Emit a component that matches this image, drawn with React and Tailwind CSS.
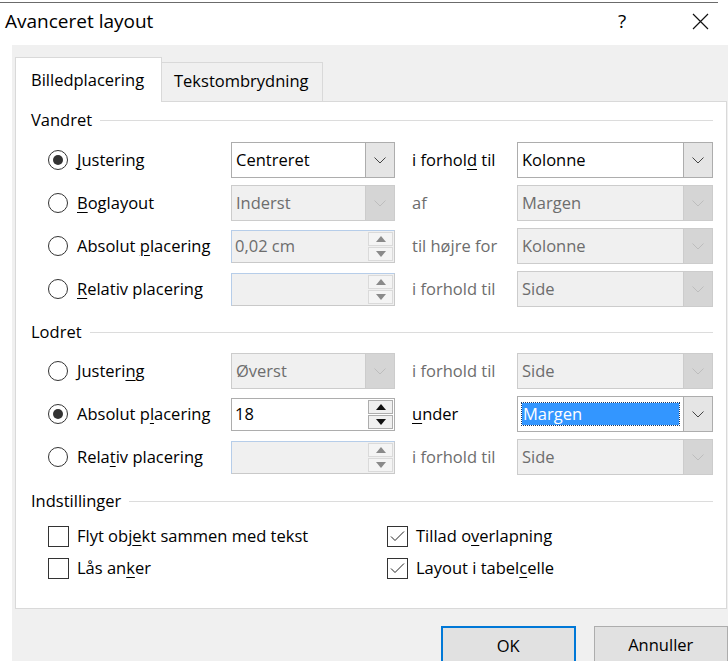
import React from "react";

const font = { fontFamily: '"Open Sans", "Noto Sans", sans-serif' };

function Chevron({ disabled }) {
  return (
    <svg width="12" height="7" viewBox="0 0 12 7">
      <polyline
        points="0.5,0.5 6,6 11.5,0.5"
        fill="none"
        stroke={disabled ? "#bdbdbd" : "#444"}
        strokeWidth="1"
      />
    </svg>
  );
}

function Combo({ value, disabled, selected, width }) {
  return (
    <div
      className={`flex h-[36px] border ${
        disabled ? "border-[#cccccc] bg-[#f0f0f0]" : "border-[#adadad] bg-white"
      }`}
      style={{ width }}
    >
      <div className="flex-1 flex items-center px-[4px] min-w-0">
        {selected ? (
          <div className="h-[22px] w-full flex items-center bg-[#3396ff] outline outline-1 outline-dotted outline-[#1a3a66] text-white px-[1px]">
            {value}
          </div>
        ) : (
          <span className={disabled ? "text-[#6d6d6d]" : "text-black"}>{value}</span>
        )}
      </div>
      <div
        className={`w-[29px] flex items-center justify-center border-l ${
          disabled ? "border-[#cccccc] bg-[#d5d5d5]" : "border-[#adadad] bg-[#e5e5e5]"
        }`}
      >
        <Chevron disabled={disabled} />
      </div>
    </div>
  );
}

function Arrow({ up, disabled }) {
  return (
    <svg width="10" height="6" viewBox="0 0 10 6">
      <polygon
        points={up ? "5,0 10,6 0,6" : "0,0 10,0 5,6"}
        fill={disabled ? "#8a8a8a" : "#111"}
      />
    </svg>
  );
}

function Spinner({ value, disabled }) {
  return (
    <div
      className={`flex h-[33px] w-[164px] border ${
        disabled
          ? "border-[#c9c9c9] border-t-[#b6cde9] border-l-[#b6cde9] bg-[#f0f0f0]"
          : "border-[#adadad] bg-white"
      }`}
    >
      <div className={`flex-1 flex items-center px-[3px] ${disabled ? "text-[#6d6d6d]" : "text-black"}`}>
        {value}
      </div>
      <div className="w-[26px] flex flex-col py-[1px] pr-[1px] gap-[1px]">
        <div
          className={`flex-1 flex items-center justify-center border ${
            disabled ? "border-[#dadada] bg-[#f4f4f4]" : "border-[#adadad] bg-[#f0f0f0]"
          }`}
        >
          <Arrow up disabled={disabled} />
        </div>
        <div
          className={`flex-1 flex items-center justify-center border ${
            disabled ? "border-[#dadada] bg-[#f4f4f4]" : "border-[#adadad] bg-[#f0f0f0]"
          }`}
        >
          <Arrow disabled={disabled} />
        </div>
      </div>
    </div>
  );
}

function Radio({ checked }) {
  return (
    <div className="w-[20px] h-[20px] rounded-full border border-[#333] flex items-center justify-center bg-white shrink-0">
      {checked && <div className="w-[10px] h-[10px] rounded-full bg-[#333]" />}
    </div>
  );
}

function Check({ checked }) {
  return (
    <div className="w-[21px] h-[21px] border border-[#333] bg-white flex items-center justify-center shrink-0">
      {checked && (
        <svg width="15" height="11" viewBox="0 0 15 11">
          <polyline points="1,5.5 5,9.5 14,0.5" fill="none" stroke="#222" strokeWidth="1" />
        </svg>
      )}
    </div>
  );
}

function U({ children }) {
  return <span className="underline underline-offset-[3px] decoration-1">{children}</span>;
}

function GroupHeader({ title }) {
  return (
    <div className="h-[20px] flex items-center gap-[8px] pr-[13px]">
      <span>{title}</span>
      <div className="flex-1 h-px bg-[#dcdcdc]" />
    </div>
  );
}

function Row({ checked, label, field, middle, middleDisabled, right }) {
  return (
    <div className="h-[36px] flex items-center pl-[17px]">
      <div className="w-[183px] flex items-center gap-[9px]">
        <Radio checked={checked} />
        <span>{label}</span>
      </div>
      {field}
      <div className={`w-[105px] ml-[17px] ${middleDisabled ? "text-[#6d6d6d]" : "text-black"}`}>{middle}</div>
      {right}
    </div>
  );
}

function CheckRow({ checked, children }) {
  return (
    <div className="w-[341px] flex items-center gap-[8px]">
      <Check checked={checked} />
      <span>{children}</span>
    </div>
  );
}

export default function App() {
  return (
    <div className="w-[728px] h-[661px] bg-white overflow-hidden flex flex-col text-[16.5px] text-black" style={font}>
      {/* window title */}
      <div className="h-[45px] shrink-0 flex flex-col">
        <div className="mt-[2px] h-px w-[718px] bg-[#6b6b6b]" />
        <div className="flex-1 flex items-center pl-[5px] pb-[6px]">
          <span className="text-[19px] flex-1">Avanceret layout</span>
          <span className="text-[19px] w-[16px] mr-[62px] text-center">?</span>
          <svg width="17" height="17" viewBox="0 0 17 17" className="mr-[19px]">
            <path d="M1 1 L16 16 M16 1 L1 16" stroke="#111" strokeWidth="1.2" />
          </svg>
        </div>
      </div>

      {/* dialog body */}
      <div className="flex-1 ml-[12px] bg-[#f0f0f0] pt-[12px] pl-[3px] flex flex-col">
        <div className="flex items-end h-[45px] relative z-10">
          <div className="h-[45px] w-[147px] bg-white border border-[#d9d9d9] border-b-0 pl-[15px] flex items-center">
            Billedplacering
          </div>
          <div className="h-[40px] w-[161px] border border-l-0 border-[#d9d9d9] border-b-0 pl-[12px] flex items-center pb-[2px]">
            Tekstombrydning
          </div>
        </div>

        <div className="-mt-px h-[508px] w-[712px] bg-white border border-[#d9d9d9] pl-[15px] flex flex-col">
          <div className="mt-[8px]">
            <GroupHeader title="Vandret" />
          </div>
          <div className="mt-[12px] flex flex-col gap-[7px]">
            <Row
              checked
              label={<><U>J</U>ustering</>}
              field={<Combo value="Centreret" width={164} />}
              middle={<>i forhol<U>d</U> til</>}
              right={<Combo value="Kolonne" width={196} />}
            />
            <Row
              label={<><U>B</U>oglayout</>}
              field={<Combo value="Inderst" width={164} disabled />}
              middle="af"
              middleDisabled
              right={<Combo value="Margen" width={196} disabled />}
            />
            <Row
              label={<>Absolut <U>p</U>lacering</>}
              field={<Spinner value="0,02 cm" disabled />}
              middle="til højre for"
              middleDisabled
              right={<Combo value="Kolonne" width={196} disabled />}
            />
            <Row
              label={<><U>R</U>elativ placering</>}
              field={<Spinner value="" disabled />}
              middle="i forhold til"
              middleDisabled
              right={<Combo value="Side" width={196} disabled />}
            />
          </div>

          <div className="mt-[15px]">
            <GroupHeader title="Lodret" />
          </div>
          <div className="mt-[11px] flex flex-col gap-[7px]">
            <Row
              label={<>Justeri<U>n</U>g</>}
              field={<Combo value="Øverst" width={164} disabled />}
              middle="i forhold til"
              middleDisabled
              right={<Combo value="Side" width={196} disabled />}
            />
            <Row
              checked
              label={<>Absolut p<U>l</U>acering</>}
              field={<Spinner value="18" />}
              middle={<><U>u</U>nder</>}
              right={<Combo value="Margen" width={196} selected />}
            />
            <Row
              label={<>Rela<U>t</U>iv placering</>}
              field={<Spinner value="" disabled />}
              middle="i forhold til"
              middleDisabled
              right={<Combo value="Side" width={196} disabled />}
            />
          </div>

          <div className="mt-[16px]">
            <GroupHeader title="Indstillinger" />
          </div>
          <div className="mt-[13px] flex flex-col gap-[8px] pl-[17px]">
            <div className="h-[24px] flex items-center">
              <CheckRow>Flyt obj<U>e</U>kt sammen med tekst</CheckRow>
              <CheckRow checked>Tillad o<U>v</U>erlapning</CheckRow>
            </div>
            <div className="h-[24px] flex items-center">
              <CheckRow>Lås an<U>k</U>er</CheckRow>
              <CheckRow checked>Layout i tabel<U>c</U>elle</CheckRow>
            </div>
          </div>
        </div>

        <div className="flex mt-[17px] pl-[426px] gap-[18px]">
          <button className="w-[135px] h-[40px] bg-[#e1e1e1] border-2 border-[#0078d7] flex items-center justify-center">
            OK
          </button>
          <button className="w-[135px] h-[40px] bg-[#e1e1e1] border border-[#adadad] flex items-center justify-center pb-[2px]">
            Annuller
          </button>
        </div>
      </div>
    </div>
  );
}
